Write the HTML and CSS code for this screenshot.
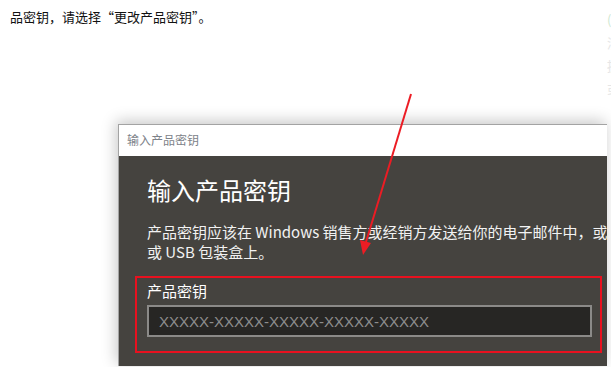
FILE: index.html
```html
<!DOCTYPE html>
<html lang="zh-CN">

<head>
  <meta charset="UTF-8">
  <meta name="viewport" content="width=device-width, initial-scale=1.0">
  <title>输入产品密钥</title>
  <link rel="stylesheet" href="styles.css">
</head>

<body>
  <div class="page">
    <div class="article">
      <p class="lead">品密钥，请选择“更改产品密钥”。</p>

      <div class="dialog">
        <div class="titlebar">输入产品密钥</div>
        <div class="dialog-body">
          <h1 class="heading">输入产品密钥</h1>
          <p class="desc">产品密钥应该在 Windows 销售方或经销方发送给你的电子邮件中，或<br>或 USB 包装盒上。</p>
          <div class="keybox">
            <label class="keylabel" for="keyInput">产品密钥</label>
            <input class="keyinput" type="text" id="keyInput" placeholder="XXXXX-XXXXX-XXXXX-XXXXX-XXXXX">
          </div>
        </div>
      </div>
    </div>

    <div class="aside">
      <span class="green">(</span>
      <span>涉</span>
      <span>提</span>
      <span>或</span>
    </div>

    <!-- 红色箭头标注 -->
    <svg class="arrow" width="611" height="367" viewBox="0 0 611 367">
      <line x1="411" y1="94" x2="366" y2="242" stroke="#ec1c24" stroke-width="2"/>
      <polygon points="363,255 360,240 371,243" fill="#ec1c24"/>
    </svg>
  </div>
</body>

</html>
```

FILE: styles.css
```css
html, body {
  margin: 0;
  background: #fff;
}

body {
  font-family: "Noto Sans CJK SC", "Noto Sans", sans-serif;
  overflow: hidden;
}

.page {
  position: relative;
  display: flex;
  width: 611px;
  height: 367px;
}

.article {
  width: 607px;
  flex-shrink: 0;
}

.lead {
  margin: 0;
  padding: 8px 0 0 10px;
  font-size: 13px;
  line-height: 18px;
  color: #111;
}

.dialog {
  margin: 98px 0 0 118px;
  width: 489px;
  height: 242px;
  box-sizing: border-box;
  border-top: 1px solid #a3a3a3;
  border-left: 1px solid #a3a3a3;
  box-shadow: -2px -3px 14px rgba(0, 0, 0, 0.22);
  display: flex;
  flex-direction: column;
  overflow: hidden;
}

.titlebar {
  height: 31px;
  flex-shrink: 0;
  background: #fff;
  padding-left: 8px;
  font-size: 12px;
  line-height: 30px;
  color: #7d8289;
}

.dialog-body {
  flex: 1;
  background: #45433f;
  padding: 18px 0 0 16px;
}

.heading {
  margin: 0;
  padding-left: 12px;
  font-size: 24px;
  font-weight: normal;
  line-height: 32px;
  color: #fff;
}

.desc {
  margin: 16px 0 0;
  padding-left: 12px;
  font-size: 15px;
  line-height: 20px;
  color: #f2f2f2;
  white-space: nowrap;
}

.keybox {
  margin-top: 14px;
  width: 467px;
  height: 77px;
  box-sizing: border-box;
  border: 2px solid #e8111f;
  padding: 3px 8px 0 10px;
}

.keylabel {
  display: block;
  font-size: 15px;
  line-height: 20px;
  color: #fff;
}

.keyinput {
  display: block;
  margin-top: 4px;
  width: 445px;
  height: 32px;
  box-sizing: border-box;
  border: 2px solid #8b8a88;
  background: #272624;
  padding: 0 10px;
  font-family: "Liberation Sans", sans-serif;
  font-size: 15px;
  color: #fff;
  outline: none;
}

.keyinput::placeholder {
  color: #8d8d8d;
}

.aside {
  flex: 1;
  overflow: hidden;
  display: flex;
  flex-direction: column;
  padding-top: 8px;
  font-size: 13px;
  line-height: 23px;
  color: #e6e6e6;
}

.aside .green {
  color: #cfe8d2;
}

.arrow {
  position: absolute;
  left: 0;
  top: 0;
  pointer-events: none;
}
```
